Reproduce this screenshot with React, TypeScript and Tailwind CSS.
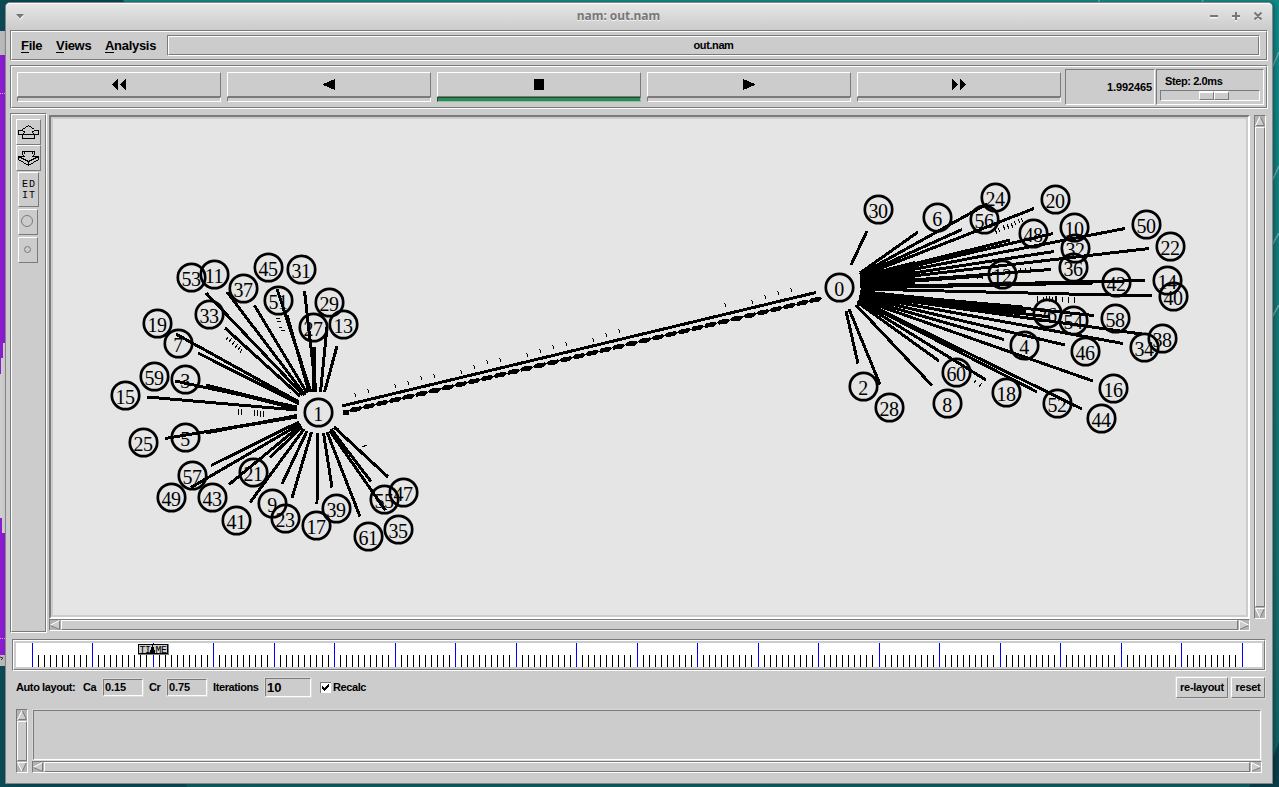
import React from "react";

const SUNK = "border border-t-[#7a7a7a] border-l-[#7a7a7a] border-b-white border-r-white";
const RAISED = "border border-t-white border-l-white border-b-[#7a7a7a] border-r-[#7a7a7a]";

function Groove({ className = "", inner = "", children }: { className?: string; inner?: string; children?: React.ReactNode }) {
  return (
    <div className={`${SUNK} ${className}`}>
      <div className={`${RAISED} h-full w-full ${inner}`}>{children}</div>
    </div>
  );
}

type Dir = "up" | "down" | "left" | "right";

function Arrow({ dir }: { dir: Dir }) {
  const shapes: Record<Dir, [string, string, string]> = {
    up: ["M5 0L10 10H0Z", "M0.5 10L5 0.5", "M5.5 1L9.5 9.5H0.5"],
    down: ["M0 0H10L5 10Z", "M9.5 0.5H0.5L5 9.5", "M9.5 0.5L5 10"],
    left: ["M0 5L10 0V10Z", "M0.5 5L9.5 0.5", "M9.5 0.5V9.5L0.5 5.5"],
    right: ["M0 0L10 5L0 10Z", "M0.5 10V0.5L9.5 5", "M9.5 5.5L0.5 9.5"],
  };
  const [fill, light, dark] = shapes[dir];
  const gap: Record<Dir, string> = { up: "mb-px", down: "mt-px", left: "mr-px", right: "ml-px" };
  return (
    <svg width="10" height="10" viewBox="0 0 10 10" className={`block shrink-0 ${gap[dir]}`}>
      <path d={fill} fill="#cccccc" />
      <path d={dark} fill="none" stroke="#7a7a7a" />
      <path d={light} fill="none" stroke="#ffffff" />
    </svg>
  );
}

function ScrollBar({ vertical = false, className = "" }: { vertical?: boolean; className?: string }) {
  return (
    <div className={`${SUNK} flex bg-[#b3b3b3] ${vertical ? "w-3 flex-col" : "h-3"} ${className}`}>
      <Arrow dir={vertical ? "up" : "left"} />
      <div className={`${RAISED} grow bg-[#cccccc]`} />
      <Arrow dir={vertical ? "down" : "right"} />
    </div>
  );
}

function Transport({ active = false, children }: { active?: boolean; children: React.ReactNode }) {
  return (
    <div className="w-[204px]">
      <div className={`${RAISED} flex h-[25px] items-center justify-center`}>
        <svg width="16" height="12" viewBox="0 0 16 12" shapeRendering="crispEdges">{children}</svg>
      </div>
      <div className={active ? "h-[5px] border border-t-[#1b4f33] border-l-[#1b4f33] border-b-[#8fbfa4] border-r-[#8fbfa4] bg-[#2e8b57]" : `${SUNK} h-[5px]`} />
    </div>
  );
}

const nodes: [number, number, number][] = [
  [53, 191, 277], [11, 214, 274], [37, 243, 288], [45, 268, 267], [31, 301, 269], [51, 278, 300],
  [29, 329, 302], [27, 313, 327], [13, 343, 324], [33, 209, 314], [19, 157, 323], [7, 178, 343],
  [59, 154, 376], [3, 185, 379], [15, 125, 395], [1, 318, 412], [25, 143, 442], [5, 185, 437],
  [57, 192, 475], [49, 171, 497], [43, 212, 497], [21, 253, 472], [41, 236, 520], [9, 272, 503],
  [23, 285, 518], [17, 316, 525], [39, 336, 508], [55, 384, 499], [47, 403, 492], [61, 368, 536],
  [35, 398, 529],
  [30, 878, 209], [6, 937, 217], [24, 995, 197], [56, 984, 219], [20, 1055, 199], [48, 1033, 233],
  [10, 1074, 227], [50, 1146, 224], [22, 1170, 246], [32, 1075, 248], [36, 1073, 267], [12, 1002, 274],
  [42, 1116, 282], [14, 1167, 280], [40, 1173, 296], [26, 1047, 313], [54, 1073, 320], [58, 1115, 318],
  [4, 1024, 345], [46, 1085, 351], [34, 1144, 347], [38, 1162, 338], [2, 863, 386], [28, 889, 407],
  [8, 947, 403], [60, 956, 372], [18, 1006, 392], [52, 1057, 403], [16, 1113, 388], [44, 1101, 418],
  [0, 839, 287],
];

const links: [number, number, number, number][] = [
  [227, 292, 305, 395], [206, 293, 303, 395], [254.5, 305.5, 307, 393], [225, 328, 300, 396],
  [277, 289, 311, 392], [287, 315, 309, 392], [304.5, 291, 316, 392], [314.5, 347, 315, 392],
  [313.5, 347, 314, 392],
  [327, 327, 320.5, 392], [337, 346, 324.5, 392], [176, 334, 299, 402], [198, 353, 299, 404],
  [175, 381, 297, 407], [206, 385, 297, 408], [206, 386, 297, 409], [147, 397, 297, 410],
  [165, 438.5, 297, 416.5], [206, 433, 297, 415.5], [206, 432, 297, 417],
  [211, 465.5, 299, 422], [191, 487.5, 300, 424], [229, 484.5, 301, 425],
  [270, 457.5, 302, 427], [250, 502.5, 304, 429], [282, 484, 307, 431], [292, 498, 311.5, 432],
  [317, 504, 317.5, 433], [332, 487.5, 323.5, 433], [360, 516.5, 327, 432], [371, 481.5, 331, 429],
  [385.5, 510.5, 330, 431], [388, 477, 334, 427],
  [851, 265, 867, 231], [860, 273, 918, 232], [860, 274.5, 987, 204], [861, 275, 962, 229.5],
  [861, 276, 1034, 208.5], [861, 277, 1010, 240], [861, 278.5, 1053, 233.5], [861, 279.5, 1125, 228.5],
  [861, 281, 1054, 251.5], [861, 282, 1149, 248.5], [861, 284, 1051, 269.5], [861, 285, 983, 276],
  [861, 287, 1145, 280.5], [861, 288, 1093, 283], [861, 289, 1152, 296], [860, 291.5, 1094, 315.5],
  [860, 292.5, 1026, 311], [860, 293.5, 1050, 317], [860, 294.5, 1141.5, 334], [860, 295.5, 1123, 343.5],
  [859, 296.5, 1065, 345], [859, 298, 1004, 339.5], [859, 299, 1093, 381], [859, 299.5, 1082, 409],
  [859, 300.5, 1037, 392], [858, 301, 986, 380], [857, 302, 939, 361], [856, 305, 932, 385.5],
  [846, 311, 858, 363.5], [849, 309, 880, 384.5],
  [342, 406, 816, 292.5],
];

const linkMarks: [number, number][] = [
  [355, 395], [368, 391], [395, 386], [408, 383], [421, 378], [434, 376], [461, 372], [474, 367],
  [487, 362], [500, 360], [527, 355], [540, 351], [553, 347], [566, 344], [593, 340], [606, 335],
  [619, 331], [725, 305], [752, 302], [765, 297], [778, 293], [791, 290],
];

const finePackets =
  "M238.5 409v6M241.5 409v6M254.5 410v6M257.5 410v6M260.5 411v6M263.5 411v6" +
  "M226 340l2-3M229 342l3-4M232 345l3-4M235 348l3-4M238 350l3-4M240 353l2-4" +
  "M276 319l4-1M277 322l4-1M279 328l3-1M281 331l4-1M362 447l5-2M290 392v1M338 428v1" +
  "M1037.5 296v6M1043.5 297v5M1049.5 296v6M1055.5 296v6M1062.5 297v5M1068.5 297v6M1074.5 297v6" +
  "M1046.5 296v5M1052.5 297v5M1056.5 296v6" +
  "M995 229l2 5M998 228l2 4M1003 225l2 5M1007 224l2 5M1011 223l2 5M1014 221l2 4M1018 219l2 4M1021 218l2 4" +
  "M977 274v5M982 274v5M1020.5 268v4M1025.5 268v4M1030.5 267v4M976 380l-2 3M982 383l-3 4" +
  "M888 268l3 2M893 267l4 2M898 266l5 2";

function Network() {
  const packets = Array.from({ length: 36 }, (_, i) => i);
  return (
    <svg width="1193" height="496" viewBox="53 119 1193 496" className="block font-normal" shapeRendering="crispEdges">
      <g stroke="#000" strokeWidth="3">
        {links.map(([x1, y1, x2, y2], i) => (
          <line key={i} x1={x1} y1={y1} x2={x2} y2={y2} />
        ))}
      </g>
      <path d="M860 275L915 261V285L860 288ZM860 291L1022 305.500L1026 313L1018 315L896 301L860 298Z" />
      <path d="M344 412L818 299" stroke="#000" strokeWidth="1" />
      <path d="M343 410h6v4.500h-6Z M815 297h4v5h-4Z" />
      {packets.map((i) => {
        const x = 355.7 + i * 13.14;
        const y = 409.3 - i * 3.13;
        return <polygon key={i} points={`${x - 6},${y} ${x - 3},${y - 2} ${x + 5},${y - 3} ${x + 6.5},${y - 1} ${x + 3},${y + 2} ${x - 5},${y + 3}`} />;
      })}
      <path d={finePackets} stroke="#000" fill="none" strokeWidth="1" />
      {linkMarks.map(([x, y]) => (
        <path key={x} d={`M${x - 1}.5 ${y - 2}v1M${x}.5 ${y - 1}v3`} stroke="#000" />
      ))}
      <g fill="none" stroke="#000" strokeWidth="2.7" shapeRendering="geometricPrecision">
        {nodes.map(([id, x, y]) => (
          <circle key={id} cx={x + 0.5} cy={y + 0.5} r="13.7" />
        ))}
      </g>
      <g fontFamily="'Liberation Serif', serif" fontSize="20" textAnchor="middle">
        {nodes.map(([id, x, y]) => (
          <text key={id} x={x} y={y + 9}>{id}</text>
        ))}
      </g>
    </svg>
  );
}

function Timeline() {
  return (
    <svg width="1246" height="24" viewBox="16 643 1246 24" className="block bg-white font-normal" shapeRendering="crispEdges">
      {Array.from({ length: 201 }, (_, k) => {
        const major = k % 10 === 0;
        return <rect key={k} x={Math.floor(32 + k * 6.05 + 0.001)} y={major ? 643 : 655} width="1" height={major ? 24 : 12} fill={major ? "#0000ff" : "#000"} />;
      })}
      <rect x="138" y="644" width="31" height="11" fill="#000" />
      <rect x="139" y="645" width="28" height="8" fill="#cccccc" />
      <path d="M168 644h1v11h-31v-1h30Z" fill="#7a7a7a" />
      <text x="139.500" y="652.500" fontFamily="'Liberation Mono', monospace" fontSize="10" textLength="11" lengthAdjust="spacingAndGlyphs">TI</text>
      <text x="155.500" y="652.500" fontFamily="'Liberation Mono', monospace" fontSize="10" textLength="11" lengthAdjust="spacingAndGlyphs">ME</text>
      <path d="M152 645h1v2h1v3h1v4h-5v-4h1v-3h1Z" />
    </svg>
  );
}

function Desktop() {
  return (
    <svg width="1279" height="787" viewBox="0 0 1279 787" className="absolute inset-0">
      <defs>
        <linearGradient id="teal" x1="0" y1="0" x2="0" y2="1">
          <stop offset="0" stopColor="#128a8a" />
          <stop offset="0.25" stopColor="#127f7e" />
          <stop offset="0.8" stopColor="#156c6a" />
          <stop offset="1" stopColor="#0f5f62" />
        </linearGradient>
      </defs>
      <rect width="1279" height="787" fill="url(#teal)" />
      <path d="M0 0H123L128 8H40V60H0ZM0 640H30V780H181L188 787H0Z" fill="#0b4a55" />
      <path d="M1279 742L1272 760V783H1251L1249 787H1279Z" fill="#0b3f4a" />
      <rect y="31" width="8" height="635" fill="#b9b9b9" />
      <rect y="55" width="8" height="600" fill="#8a1bcf" />
      <path d="M3 343H6V518H6V533H2V518H0V374H1V358H3Z" fill="#cdcdcd" />
      <path d="M0 93.500H5M0 638.500H5" stroke="#d9a8ee" strokeDasharray="1 1" />
      <path d="M0 657l3 1-2 2" fill="none" stroke="#333" />
      <g stroke="#6fa9a6" strokeWidth="1.5">
        <path d="M1272 68L1279 52M1272 181L1279 166M1272 245L1279 233M1272 317L1279 305M1099 0V2M1203 0l-1 2" />
      </g>
    </svg>
  );
}

function Field({ value, className }: { value: string; className: string }) {
  return (
    <div className={`border border-[#d9d9d9] ${className}`}>
      <div className={`${SUNK} flex h-full items-center pl-px`}>{value}</div>
    </div>
  );
}

export default function App() {
  return (
    <div className="relative h-[787px] w-[1279px] overflow-hidden font-['Liberation_Sans',sans-serif] text-[11px] leading-none font-bold tracking-[-0.4px] text-black">
      <Desktop />
      <div className="absolute top-[2px] left-[5px] flex h-[782px] w-[1268px] flex-col rounded-t-[5px] border border-[#858585] bg-[#cccccc] shadow-[2px_0_4px_rgba(0,0,0,0.3)]">
        <header className="flex h-[27px] shrink-0 items-center rounded-t-[4px] border-t border-white bg-linear-to-b from-[#e6e6e6] to-[#cbcbcb] pr-[9px] pb-[2px] pl-[10px]">
          <svg width="9" height="6" viewBox="0 0 9 6" className="mt-px"><path d="M1 1.500L4.500 5.500L8 1.500" fill="#fff" /><path d="M0 0H8L4 4.500Z" fill="#777" /></svg>
          <h1 className="grow pl-[3px] text-center font-['Noto_Sans',sans-serif] text-[12px] tracking-[-0.04px] text-[#777777] [text-shadow:0_1px_0_#f2f2f2]">nam: out.nam</h1>
          <svg width="54" height="12" viewBox="0 0 54 12" fill="none" strokeWidth="2">
            <path d="M1 7.500H9M23 7.500H31M27 3V11.500M45.500 3L52.500 10M52.500 3L45.500 10" stroke="#f4f4f4" />
            <path d="M1 6H9M23 6H31M27 2V10M45.500 2.500L52.500 9.500M52.500 2.500L45.500 9.500" stroke="#777" />
          </svg>
        </header>

        <div className="flex grow flex-col pl-1">
          <Groove className="h-[31px] w-[1258px] shrink-0" inner="flex items-center pl-[9px]">
            <nav className="flex w-[146px] pt-px text-[13px] tracking-[-0.3px]">
              {["File", "Views", "Analysis"].map((m, i) => (
                <span key={m} className={i === 0 ? "w-[35px]" : i === 1 ? "w-[49px]" : ""}>
                  <span className="inline-block border-b border-black">{m[0]}</span>{m.slice(1)}
                </span>
              ))}
            </nav>
            <Groove className="h-[21px] w-[1093px]" inner="flex items-center justify-center">out.nam</Groove>
          </Groove>

          <Groove className="mt-1 h-[44px] w-[1258px] shrink-0" inner="flex pl-[5px]">
            <div className="flex gap-[6px] pt-[5px]">
              <Transport><path d="M7 0V11L1 6V5ZM15 0V11L9 6V5Z" /></Transport>
              <Transport><path d="M14 0V11L2 6V5Z" /></Transport>
              <Transport active><path d="M3 0h10v11h-10Z" /></Transport>
              <Transport><path d="M2 0V11L14 6V5Z" /></Transport>
              <Transport><path d="M1 0V11L7 6V5ZM9 0V11L15 6V5Z" /></Transport>
            </div>
            <div className={`${SUNK} mt-[2px] ml-1 flex h-9 w-[90px] items-center justify-end pr-[2px] tracking-[-0.1px]`}>1.992465</div>
            <div className={`${SUNK} mt-[2px] ml-px h-9 w-[108px] pt-[6px] pl-[3px]`}>
              <div className="pl-[5px]">Step: 2.0ms</div>
              <div className={`${SUNK} mt-[3px] flex h-[11px] w-[100px] pl-[38px]`}>
                <div className={`${RAISED} w-[15px] border-t-2`} />
                <div className={`${RAISED} w-[15px] border-t-2`} />
              </div>
            </div>
          </Groove>

          <main className="mt-1 flex h-[520px] shrink-0">
            <Groove className="h-[520px] w-[37px]" inner="flex flex-col pt-1 pl-1">
              <button className={`${RAISED} flex h-[26px] w-[25px] items-center justify-center`}>
                <svg width="21" height="15" viewBox="0 0 21 15" shapeRendering="crispEdges" fill="none" stroke="#000">
                  <path d="M10.500 .5L16.500 4.500M10.500 .5L4.500 4.500M4 5.500H0.500V9.500H4.500L6.500 7.500V6.500L4 5.500M17 5.500H20.500V9.500H16.500L14.500 7.500V6.500L17 5.500M4.500 9.500V13.500H16.500V9.500H4.500" />
                </svg>
              </button>
              <button className={`${RAISED} flex h-[26px] w-[25px] items-center justify-center`}>
                <svg width="21" height="16" viewBox="0 0 21 16" className="mt-px" shapeRendering="crispEdges" fill="none" stroke="#000">
                  <path d="M4.500 .5H16.500V3.500L14.500 5.500L20.500 5.500V8.500L10.500 14.500L0.500 8.500V5.500L6.500 5.500L4.500 3.500ZM0.500 5.500L10.500 10.500L20.500 5.500M10.500 10.500V14.500M6.500 1V3M14.500 1V3" />
                </svg>
              </button>
              <button className={`${RAISED} mt-px ml-[2px] flex h-[35px] w-[21px] flex-col items-center justify-center font-['Liberation_Mono',monospace] text-[10px] leading-[11px] font-normal tracking-[1px]`}>
                <span className="pl-px">ED</span><span className="pl-px">IT</span>
              </button>
              <button className={`${RAISED} mt-[2px] ml-[2px] flex h-[26px] w-[20px] items-center justify-center`}>
                <span className="-mt-[2px] -ml-[2px] h-3 w-3 rounded-full border border-[#7a7a7a]" />
              </button>
              <button className={`${RAISED} mt-[2px] ml-[2px] flex h-[26px] w-[20px] items-center justify-center`}>
                <span className="-mt-px -ml-px h-[7px] w-[7px] rounded-full border border-[#7a7a7a]" />
              </button>
            </Groove>
            <div className="mt-[2px] ml-[2px] w-[1201px]">
              <div className="h-[504px] border-2 border-t-[#7a7a7a] border-r-white border-b-white border-l-[#7a7a7a]">
                <div className="border-2 border-[#cccccc] bg-[#e5e5e5]"><Network /></div>
              </div>
              <ScrollBar />
            </div>
            <ScrollBar vertical className="mt-[2px] ml-1 h-[504px]" />
          </main>

          <Groove className="mt-[6px] ml-[2px] h-8 w-[1254px] shrink-0" inner="p-[2px]"><Timeline /></Groove>

          <div className="mt-[5px] flex h-[23px] shrink-0 items-center pl-[6px]">
            <span className="w-[67px]">Auto layout:</span>
            <span className="w-[19px]">Ca</span>
            <Field value="0.15" className="h-[19px] w-[42px] tracking-[-0.1px]" />
            <span className="ml-[5px] w-[17px]">Cr</span>
            <Field value="0.75" className="h-[19px] w-[42px] tracking-[-0.1px]" />
            <span className="ml-[5px] w-[51px]">Iterations</span>
            <Field value="10" className="h-[21px] w-[48px] text-[13px] tracking-[0px]" />
            <svg width="11" height="11" viewBox="0 0 11 11" className="ml-2" shapeRendering="crispEdges">
              <path d="M0 0H11V11H0Z" fill="#fff" /><path d="M0 11V0H11V1H1V11Z" fill="#7a7a7a" />
              <path d="M2 4h1v1h1v1h1v-1h1v-1h1v-1h1v-1h1v3h-1v1h-1v1h-1v1h-1v1h-1v-1h-1v-1h-1Z" />
            </svg>
            <span className="ml-[2px] grow">Recalc</span>
            <button className="mr-px h-[23px] w-[54px] border border-[#d9d9d9]"><span className={`${RAISED} flex h-full items-center justify-center tracking-[-0.3px]`}>re-layout</span></button>
            <button className="mr-[6px] h-[23px] w-[36px] border border-[#d9d9d9]"><span className={`${RAISED} flex h-full items-center justify-center tracking-[-0.3px]`}>reset</span></button>
          </div>

          <div className="mt-[10px] flex h-16 shrink-0 pl-[6px]">
            <ScrollBar vertical />
            <div className="ml-1 w-[1230px]">
              <div className="h-[52px] border border-[#d9d9d9]"><div className={`${SUNK} h-full`} /></div>
              <ScrollBar />
            </div>
          </div>
        </div>
      </div>
    </div>
  );
}
